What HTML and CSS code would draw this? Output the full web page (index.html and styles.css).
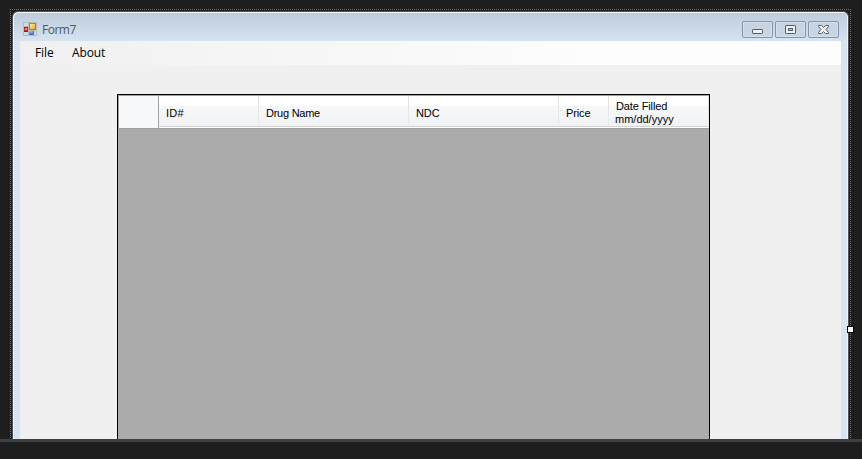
FILE: index.html
```
<!DOCTYPE html>
<html lang="en">
<head>
<meta charset="utf-8">
<title>Form7</title>
<link rel="stylesheet" href="styles.css">
</head>
<body>
<main class="designer">
  <div class="selection">
    <section class="window">
      <header class="titlebar">
        <svg class="app-icon" width="14" height="14" viewBox="0 0 14 14" shape-rendering="crispEdges">
          <defs>
            <linearGradient id="gold" x2="1" y2="1"><stop stop-color="#fff0a0"/><stop offset="1" stop-color="#e4a812"/></linearGradient>
            <linearGradient id="blue" x2="0" y2="1"><stop stop-color="#8db9f4"/><stop offset="1" stop-color="#4d80e0"/></linearGradient>
          </defs>
          <path fill="#d5dbe1" stroke="#b8bbbd" d="M.5.5h13v13H.5zM.5 4.500h5M.5 9.500h5M5.500 0v14M5.500 8.500h8"/>
          <path fill="#c62b1c" d="M1 5h4v5H1z"/>
          <path fill="#8d2119" d="M1 9h4v1H1zM1 5h4v1H1z"/>
          <path fill="#ed8a6c" d="M2 6h2v2H2z"/>
          <path fill="#b18420" d="M6 1h7v7H6z"/>
          <path fill="url(#gold)" d="M7 2h5v5H7z"/>
          <path fill="#3d6cc8" d="M6 9h5v4H6z"/>
          <path fill="url(#blue)" d="M6 9h4v3H6z"/>
        </svg>
        <h1 class="title">Form7</h1>
        <div class="controls">
          <span class="control"><svg width="11" height="9" viewBox="0 0 11 9"><rect x=".5" y="4.500" width="10" height="4" rx=".6" fill="#f2f2ef" stroke="#555a6c"/></svg></span>
          <span class="control"><svg width="11" height="9" viewBox="0 0 11 9"><rect x=".5" y=".5" width="10" height="8" rx=".6" fill="#f2f2ef" stroke="#555a6c"/><rect x="3.500" y="3.500" width="4" height="2" fill="#b9c9dc" stroke="#555a6c"/></svg></span>
          <span class="control"><svg width="11" height="9" viewBox="0 0 11 9"><path d="M.5.5h3l2 2 2-2h3v1l-2.500 3 2.500 3v1h-3l-2-2-2 2h-3v-1l2.500-3-2.500-3z" fill="#f2f2ef" stroke="#555a6c"/></svg></span>
        </div>
      </header>
      <div class="client">
        <nav class="menu"><span class="file">File</span><span class="about">About</span></nav>
        <div class="grid">
          <div class="columns">
            <div class="corner"></div>
            <div class="column id">ID#</div>
            <div class="column name">Drug Name</div>
            <div class="column">NDC</div>
            <div class="column">Price</div>
            <div class="column date"><span>Date Filled</span><span class="format">mm/dd/yyyy</span></div>
          </div>
        </div>
      </div>
    </section>
    <i class="handle"></i>
  </div>
  <footer class="tray"></footer>
</main>
</body>
</html>
```
FILE: styles.css
```
* { box-sizing: border-box; }
body { margin: 0; background: #1e1e1e; }
.designer { width: 862px; height: 459px; overflow: hidden; padding-top: 9px; }
.selection {
  position: relative;
  width: 841px;
  height: 430px;
  margin-left: 10px;
  padding: 2px 2px 0;
  background:
    repeating-linear-gradient(90deg, #707070 0 1px, #1e1e1e 1px 2px) 0 0 / 100% 1px no-repeat,
    repeating-linear-gradient(#707070 0 1px, #1e1e1e 1px 2px) 0 0 / 1px 100% no-repeat,
    repeating-linear-gradient(#707070 0 1px, #1e1e1e 1px 2px) 100% 0 / 1px 100% no-repeat;
}
.window {
  height: 428px;
  overflow: hidden;
  border: 1px solid #50545a;
  border-bottom: 0;
  border-radius: 6px 6px 0 0;
  padding: 0 7px;
  background: linear-gradient(#bdcbda, #d7e4f2 30px, #d7e4f2);
  box-shadow: inset 1px 1px #f0f4f7, inset -1px 0 #f0f4f7;
}
.titlebar { display: flex; height: 29px; padding: 9px 2px 0 3px; align-items: flex-start; }
.app-icon { margin-top: 1px; }
.title { margin: 0 0 0 5px; font: 12px/17px "Open Sans", sans-serif; letter-spacing: -.5px; color: #4b5968; }
.controls { display: flex; gap: 2px; margin-left: auto; }
.control {
  display: flex;
  align-items: center;
  justify-content: center;
  width: 31px;
  height: 17px;
  border: 1px solid #8493b0;
  border-radius: 2px;
  background: linear-gradient(#c5d3e2, #c7d5e6);
  box-shadow: inset 0 0 0 1px #d5e0eb;
}
.client { height: 398px; overflow: hidden; background: #f0f0f0; }
.menu {
  display: flex;
  height: 24px;
  padding-left: 15px;
  background: linear-gradient(90deg, #f0f0f0, #fdfdfd 70%);
  font: 12px/24px "Open Sans", sans-serif;
  color: #000;
}
.file { width: 37px; letter-spacing: -.1px; }
.about { letter-spacing: -.15px; }
.grid {
  width: 593px;
  height: 370px;
  margin: 29px 0 0 97px;
  border: 1px solid #000;
  background: #ababab;
}
.columns {
  display: grid;
  grid-template-columns: 41px 100px 150px 150px 50px 100px;
  height: 34px;
  border-top: 1px solid #a0a0a0;
  border-bottom: 1px solid #a0a0a0;
  overflow: hidden;
  font: 11px/13px "Liberation Sans", Arial, sans-serif;
  letter-spacing: -.12px;
  color: #000;
}
.corner { border: solid #a0a0a0; border-width: 0 1px; background: #f7f8fa; }
.column {
  display: flex;
  flex-direction: column;
  justify-content: center;
  padding: 2px 0 0 7px;
  background:
    linear-gradient(#fff, #fff) 0 100% / 100% 1px no-repeat,
    linear-gradient(#d5d5d5, #d5d5d5) 0 30px / 100% 1px no-repeat,
    linear-gradient(#e0e2e4, #e8eaec) 100% 0 / 1px 30px no-repeat,
    linear-gradient(#fff 10px, #f7f8fa 10px, #f1f2f4 30px);
}
.id { letter-spacing: .2px; }
.name { letter-spacing: -.25px; }
.format { margin-left: -1px; letter-spacing: 0; }
.handle {
  position: absolute;
  right: -3px;
  top: 317px;
  width: 7px;
  height: 7px;
  border: 1px solid #000;
  background: #fff;
}
.tray { height: 20px; border-top: 3px solid #3f3f46; background: #1e1e1e; }
```
